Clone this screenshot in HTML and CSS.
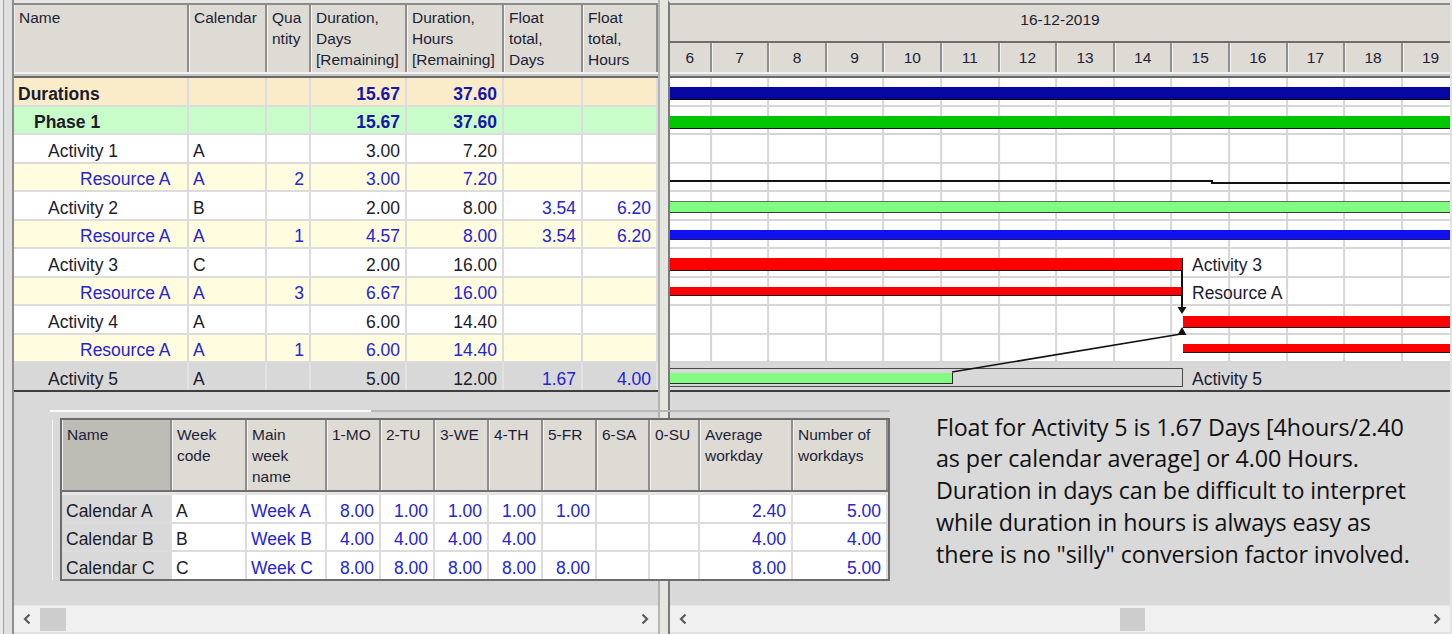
FILE: index.html
```html
<!DOCTYPE html>
<html>
<head>
<meta charset="utf-8">
<link rel="stylesheet" href="styles.css">
</head>
<body>
<div class="app">
  <div class="edge"></div>

  <div class="pane pane-left">
    <div class="thead">
      <div class="hc">Name</div>
      <div class="hc">Calendar</div>
      <div class="hc">Qua<br>ntity</div>
      <div class="hc">Duration,<br>Days<br>[Remaining]</div>
      <div class="hc">Duration,<br>Hours<br>[Remaining]</div>
      <div class="hc">Float<br>total,<br>Days</div>
      <div class="hc">Float<br>total,<br>Hours</div>
    </div>
    <div class="hgap"></div>
    <div class="tbody">
      <div class="row r-total"><div class="c lv0">Durations</div><div class="c"></div><div class="c"></div><div class="c num">15.67</div><div class="c num">37.60</div><div class="c"></div><div class="c"></div></div>
      <div class="row r-phase"><div class="c lv1">Phase 1</div><div class="c"></div><div class="c"></div><div class="c num">15.67</div><div class="c num">37.60</div><div class="c"></div><div class="c"></div></div>
      <div class="row r-act"><div class="c lv2">Activity 1</div><div class="c">A</div><div class="c"></div><div class="c num">3.00</div><div class="c num">7.20</div><div class="c"></div><div class="c"></div></div>
      <div class="row r-res"><div class="c lv3">Resource A</div><div class="c">A</div><div class="c num">2</div><div class="c num">3.00</div><div class="c num">7.20</div><div class="c"></div><div class="c"></div></div>
      <div class="row r-act"><div class="c lv2">Activity 2</div><div class="c">B</div><div class="c"></div><div class="c num">2.00</div><div class="c num">8.00</div><div class="c num blue">3.54</div><div class="c num blue">6.20</div></div>
      <div class="row r-res"><div class="c lv3">Resource A</div><div class="c">A</div><div class="c num">1</div><div class="c num">4.57</div><div class="c num">8.00</div><div class="c num">3.54</div><div class="c num">6.20</div></div>
      <div class="row r-act"><div class="c lv2">Activity 3</div><div class="c">C</div><div class="c"></div><div class="c num">2.00</div><div class="c num">16.00</div><div class="c"></div><div class="c"></div></div>
      <div class="row r-res"><div class="c lv3">Resource A</div><div class="c">A</div><div class="c num">3</div><div class="c num">6.67</div><div class="c num">16.00</div><div class="c"></div><div class="c"></div></div>
      <div class="row r-act"><div class="c lv2">Activity 4</div><div class="c">A</div><div class="c"></div><div class="c num">6.00</div><div class="c num">14.40</div><div class="c"></div><div class="c"></div></div>
      <div class="row r-res"><div class="c lv3">Resource A</div><div class="c">A</div><div class="c num">1</div><div class="c num">6.00</div><div class="c num">14.40</div><div class="c"></div><div class="c"></div></div>
      <div class="row r-sel"><div class="c lv2">Activity 5</div><div class="c">A</div><div class="c"></div><div class="c num">5.00</div><div class="c num">12.00</div><div class="c num blue">1.67</div><div class="c num blue">4.00</div></div>
    </div>
    <div class="fill"></div>
    <div class="hscroll">
      <div class="sbtn"><svg width="8" height="12" viewBox="0 0 8 12"><path d="M6.5 1.5 L2 6 L6.5 10.5" fill="none" stroke="#5a5a5a" stroke-width="2.2"/></svg></div>
      <div class="strack"><div class="thumb thumb-left"></div></div>
      <div class="sbtn"><svg width="8" height="12" viewBox="0 0 8 12"><path d="M1.5 1.5 L6 6 L1.5 10.5" fill="none" stroke="#5a5a5a" stroke-width="2.2"/></svg></div>
    </div>
  </div>

  <div class="splitter"></div>

  <div class="pane pane-right">
    <div class="ghead">
      <div class="gdate">16-12-2019</div>
      <div class="gdays">
        <div class="day first">6</div><div class="day">7</div><div class="day">8</div><div class="day">9</div><div class="day">10</div><div class="day">11</div><div class="day">12</div><div class="day">13</div><div class="day">14</div><div class="day">15</div><div class="day">16</div><div class="day">17</div><div class="day">18</div><div class="day">19</div>
      </div>
    </div>
    <div class="hgap"></div>
    <div class="gbody">
      <div class="grow"><div class="bar b-total"></div></div>
      <div class="grow"><div class="bar b-phase"></div></div>
      <div class="grow"></div>
      <div class="grow"></div>
      <div class="grow"><div class="bar b-act2"></div></div>
      <div class="grow"><div class="bar b-res2"></div></div>
      <div class="grow"><div class="bar b-red b-act3"></div><span class="glabel">Activity 3</span></div>
      <div class="grow"><div class="bar b-red b-res3"></div><span class="glabel">Resource A</span></div>
      <div class="grow"><div class="bar b-red b-act4"></div></div>
      <div class="grow"><div class="bar b-red b-res4"></div></div>
      <div class="grow g-sel"><div class="bar b-outline"></div><div class="bar b-act5"></div><span class="glabel">Activity 5</span></div>
      <svg class="links" width="780" height="316" viewBox="0 0 780 316">
        <polyline points="0,103 542,103 542,105 780,105" fill="none" stroke="#111" stroke-width="2"/>
        <line x1="512" y1="193" x2="512" y2="230" stroke="#111" stroke-width="2"/>
        <polygon points="507.5,229 516.5,229 512,236" fill="#111"/>
        <line x1="282" y1="294" x2="511" y2="256" stroke="#111" stroke-width="1.6"/>
        <polygon points="507.5,257 516.5,257 512,249" fill="#111"/>
      </svg>
    </div>
    <div class="fill note-area">
      <p class="note">Float for Activity 5 is 1.67 Days [4hours/2.40<br>as per calendar average] or 4.00 Hours.<br>Duration in days can be difficult to interpret<br>while duration in hours is always easy as<br>there is no "silly" conversion factor involved.</p>
    </div>
    <div class="hscroll">
      <div class="sbtn"><svg width="8" height="12" viewBox="0 0 8 12"><path d="M6.5 1.5 L2 6 L6.5 10.5" fill="none" stroke="#5a5a5a" stroke-width="2.2"/></svg></div>
      <div class="strack"><div class="thumb thumb-right"></div></div>
      <div class="sbtn"><svg width="8" height="12" viewBox="0 0 8 12"><path d="M1.5 1.5 L6 6 L1.5 10.5" fill="none" stroke="#5a5a5a" stroke-width="2.2"/></svg></div>
    </div>
  </div>
</div>

<div class="cal-panel">
  <div class="cal">
    <div class="cal-head">
      <div class="hc hc-sel">Name</div>
      <div class="hc">Week<br>code</div>
      <div class="hc">Main<br>week<br>name</div>
      <div class="hc">1-MO</div>
      <div class="hc">2-TU</div>
      <div class="hc">3-WE</div>
      <div class="hc">4-TH</div>
      <div class="hc">5-FR</div>
      <div class="hc">6-SA</div>
      <div class="hc">0-SU</div>
      <div class="hc">Average<br>workday</div>
      <div class="hc">Number of<br>workdays</div>
    </div>
    <div class="cal-gap"></div>
    <div class="crow"><div class="c cname">Calendar A</div><div class="c">A</div><div class="c blue">Week A</div><div class="c num">8.00</div><div class="c num">1.00</div><div class="c num">1.00</div><div class="c num">1.00</div><div class="c num">1.00</div><div class="c"></div><div class="c"></div><div class="c num">2.40</div><div class="c num">5.00</div></div>
    <div class="crow"><div class="c cname">Calendar B</div><div class="c">B</div><div class="c blue">Week B</div><div class="c num">4.00</div><div class="c num">4.00</div><div class="c num">4.00</div><div class="c num">4.00</div><div class="c num"></div><div class="c"></div><div class="c"></div><div class="c num">4.00</div><div class="c num">4.00</div></div>
    <div class="crow last"><div class="c cname">Calendar C</div><div class="c">C</div><div class="c blue">Week C</div><div class="c num">8.00</div><div class="c num">8.00</div><div class="c num">8.00</div><div class="c num">8.00</div><div class="c num">8.00</div><div class="c"></div><div class="c"></div><div class="c num">8.00</div><div class="c num">5.00</div></div>
  </div>
</div>
</body>
</html>
```

FILE: styles.css
```css
* { box-sizing: border-box; margin: 0; padding: 0; }
html, body { width: 1452px; height: 634px; overflow: hidden; }
body {
  font-family: "Liberation Sans", Arial, sans-serif;
  background: #e4e4e4;
  position: relative;
  color: #1c1c2c;
}
.app { display: flex; height: 634px; }

.edge {
  width: 14px;
  background: linear-gradient(to right, #e8e8e8 0 3px, #9e9e9e 3px 4px, #e0e0e0 4px 12px, #8e8e8e 12px 14px);
}
.splitter {
  width: 10px;
  background: linear-gradient(to right, #b4b4b4 0 2px, #e6e6e0 2px);
}

.pane {
  display: flex;
  flex-direction: column;
  border-top: 3px solid #e6e6e6;
  background: #d9d9d9;
}
.pane-left { width: 644px; }
.pane-right { width: 784px; border-left: 2px solid #7a7a7a; border-right: 2px solid #e4e4e4; }

/* ---------- task table ---------- */
.thead {
  display: grid;
  grid-template-columns: 175px 78px 44px 96px 97px 79px 75px;
  height: 71px;
  background: #dddbd4;
  border-top: 2px solid #8a8a8a;
  border-bottom: 2px solid #f2f2f2;
}
.hc {
  border-right: 2px solid #8e8e8e;
  box-shadow: inset 1px 0 0 #f3f3f0;
  padding: 2px 3px 0 5px;
  font-size: 15.5px;
  line-height: 21px;
  color: #1e1e38;
  white-space: nowrap;
  overflow: hidden;
}
.hgap { height: 2px; background: #c6c6c6; }

.tbody { border-top: 2px solid #6a6a6a; }
.row {
  display: grid;
  grid-template-columns: 175px 78px 44px 96px 97px 79px 75px;
  height: 28.5px;
  border-bottom: 2px solid #dcdcdc;
}
.c {
  border-right: 2px solid #dcdcdc;
  font-size: 17.5px;
  line-height: 27px;
  padding: 2.5px 5px 0 4px;
  white-space: nowrap;
  overflow: hidden;
}
.num { text-align: right; }
.blue { color: #2424d2; }

.lv0 { padding-left: 4px; }
.lv1 { padding-left: 20px; }
.lv2 { padding-left: 34px; }
.lv3 { padding-left: 66px; }

.r-total { background: #faebc9; font-weight: bold; }
.r-phase { background: #c8fcc8; font-weight: bold; }
.r-total .num, .r-phase .num { color: #1616aa; }
.r-act { background: #ffffff; }
.r-res { background: #fffce0; color: #2424d2; }
.r-sel { background: #d8d8d8; border-bottom: 2px solid #3e3e3e; }
.r-sel .c { border-right-color: #e2e2e2; }

.fill { flex: 1; }

/* ---------- scrollbars ---------- */
.hscroll {
  display: flex;
  height: 29px;
  background: #f0f0f0;
  border-top: 1px solid #e6e6e6;
  border-bottom: 2px solid #e2e2e2;
}
.sbtn {
  width: 26px;
  display: flex;
  align-items: center;
  justify-content: center;
}
.strack { flex: 1; padding-top: 2px; }
.thumb { height: 23px; background: #cdcdcd; }
.thumb-left { width: 26px; }
.thumb-right { width: 25px; margin-left: 424px; }

/* ---------- gantt ---------- */
.ghead {
  height: 71px;
  background: #dddbd4;
  border-top: 2px solid #8a8a8a;
  border-bottom: 2px solid #f2f2f2;
}
.gdate {
  height: 38px;
  border-bottom: 2px solid #6e6e6e;
  text-align: center;
  font-size: 15.5px;
  line-height: 21px;
  padding-top: 4px;
  color: #1e1e38;
}
.gdays { display: flex; height: 29px; overflow: hidden; }
.day {
  flex: 0 0 57.6px;
  border-right: 2px solid #8e8e8e;
  box-shadow: inset 1px 0 0 #f3f3f0;
  text-align: center;
  font-size: 15.5px;
  line-height: 29px;
  color: #1e1e38;
}
.day.first { flex-basis: 41.7px; box-shadow: none; }

.gbody {
  position: relative;
  border-top: 2px solid #6a6a6a;
  background-color: #ffffff;
  background-image: repeating-linear-gradient(to right, transparent 0 55.6px, #d6d6d6 55.6px 57.6px);
  background-position: -15.9px 0;
}
.grow {
  position: relative;
  height: 28.5px;
  border-bottom: 2px solid #d6d6d6;
}
.g-sel { background: #d8d8d8; border-bottom: 2px solid #3e3e3e; }

.bar { position: absolute; }
.b-total { left: 0; width: 780px; top: 9px; height: 13px; background: #0606a0; border-bottom: 1px solid #000; }
.b-phase { left: 0; width: 780px; top: 9.5px; height: 13px; background: #00c600; border-bottom: 1px solid #1a1a1a; }
.b-act2 { left: 0; width: 780px; top: 9px; height: 12px; background: #80fc80; border-top: 1px solid #6a6a6a; border-bottom: 1px solid #3a3a3a; }
.b-res2 { left: 0; width: 780px; top: 9.5px; height: 10px; background: #1010f0; border-bottom: 1px solid #1a1a6a; }
.b-red { background: #ff0000; border-bottom: 1px solid #1a1a1a; }
.b-act3 { left: 0; width: 513px; top: 9.3px; height: 12.5px; border-right: 1px solid #1a1a1a; }
.b-res3 { left: 0; width: 513px; top: 9.2px; height: 9.5px; border-right: 1px solid #1a1a1a; }
.b-act4 { left: 513px; width: 267px; top: 10px; height: 11.5px; }
.b-res4 { left: 513px; width: 267px; top: 9.8px; height: 8.6px; }
.b-outline { left: 0; width: 513px; top: 5.3px; height: 18.5px; border: 1px solid #4a4a4a; border-left: none; }
.b-act5 { left: 0; width: 283px; top: 9.7px; height: 11.5px; background: #84fc84; border-right: 1px solid #2a2a2a; border-bottom: 1px solid #2a2a2a; }

.glabel {
  position: absolute;
  left: 522px;
  top: 2.5px;
  font-size: 17.5px;
  line-height: 27px;
  color: #1c1c34;
  white-space: nowrap;
}
.links { position: absolute; left: 0; top: 0; pointer-events: none; }

/* ---------- note ---------- */
.note-area { padding: 20px 0 0 266px; }
.note {
  font-family: "Open Sans", "Noto Sans", sans-serif;
  font-size: 23.3px;
  line-height: 31.8px;
  color: #111111;
  white-space: nowrap;
  letter-spacing: -0.1px;
}

/* ---------- calendar panel ---------- */
.cal-panel {
  position: absolute;
  left: 50px;
  top: 410px;
  padding: 8px 0 0 10px;
}
.cal-panel::before {
  content: "";
  position: absolute;
  left: 0;
  top: 0;
  width: 840px;
  height: 2px;
  background: linear-gradient(to right, #fbfbfb 0 321px, #b8b8b8 321px);
}
.cal-panel::after {
  content: "";
  position: absolute;
  left: 2px;
  top: 10px;
  width: 1px;
  height: 160px;
  background: #f4f4f4;
}
.cal {
  width: 830px;
  border: 2px solid #6c6c6c;
  background: #ffffff;
}
.cal-head {
  display: grid;
  grid-template-columns: 110px 75px 80px 54px 54px 54px 54px 54px 53px 50px 93px 95px;
  height: 72px;
  background: #dddbd4;
  border-bottom: 2px solid #707070;
}
.cal-head .hc { padding: 4px 3px 0 5px; }
.hc-sel { background: #bebdb5; }
.cal-gap { height: 3px; background: #e6e6e6; }
.crow {
  display: grid;
  grid-template-columns: 110px 75px 80px 54px 54px 54px 54px 54px 53px 50px 93px 95px;
  height: 28.5px;
  border-bottom: 2px solid #dcdcdc;
}
.crow.last { border-bottom: none; height: 26.5px; }
.crow .c { line-height: 27px; }
.crow .num { color: #2424d2; }
.cname { background: #d9d9d9; }
```
